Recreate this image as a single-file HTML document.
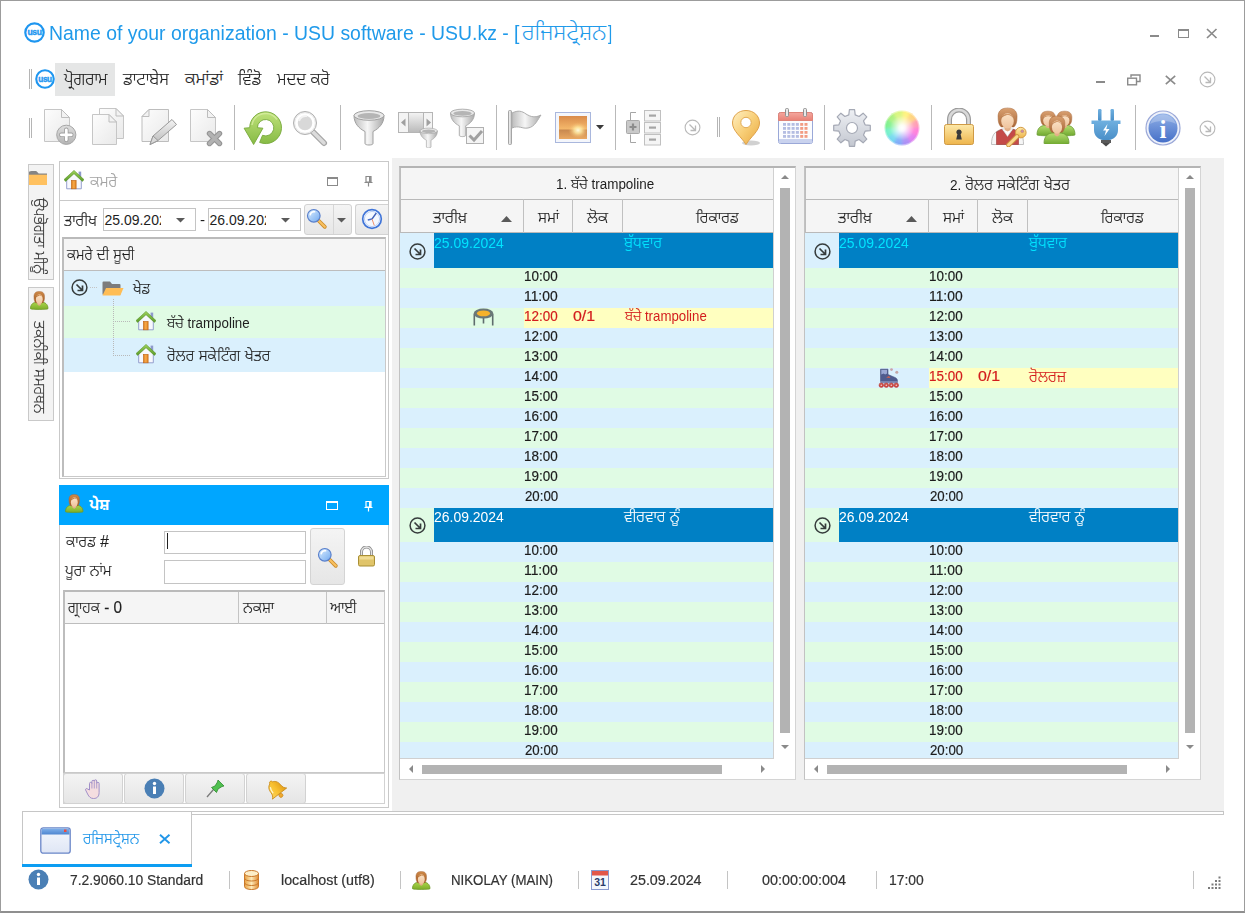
<!DOCTYPE html>
<html lang="pa"><head><meta charset="utf-8"><title>USU software</title>
<style>
html,body{margin:0;padding:0;background:#fff;}
body{width:1245px;height:913px;position:relative;overflow:hidden;font-family:"Liberation Sans","Noto Sans Gurmukhi UI","Noto Sans Gurmukhi","Mukta Mahee","Anek Gurmukhi",sans-serif;font-size:13px;color:#222;}
#w div{position:absolute;box-sizing:border-box;}
#w{position:absolute;left:0;top:0;width:1245px;height:913px;background:#fff;overflow:hidden;}
.t{white-space:pre;height:40px;line-height:40px;transform-origin:0 0;}
#w svg{display:block;}
.g{font-size:115%;}
</style></head>
<body><div id="w">
<svg width="0" height="0" style="position:absolute"><defs>
<linearGradient id="gPage" x1="0" y1="0" x2="1" y2="1"><stop offset="0" stop-color="#fdfdfd"/><stop offset="1" stop-color="#e9e9e9"/></linearGradient>
<linearGradient id="gGray" x1="0" y1="0" x2="0" y2="1"><stop offset="0" stop-color="#f4f4f4"/><stop offset="1" stop-color="#b9b9b9"/></linearGradient>
<linearGradient id="gGray2" x1="0" y1="0" x2="0" y2="1"><stop offset="0" stop-color="#dedede"/><stop offset="1" stop-color="#b4b4b4"/></linearGradient>
<linearGradient id="gGrayH" x1="0" y1="0" x2="1" y2="0"><stop offset="0" stop-color="#bdbdbd"/><stop offset=".45" stop-color="#f6f6f6"/><stop offset="1" stop-color="#a9a9a9"/></linearGradient>
<linearGradient id="gGreen" x1="0" y1="0" x2="0" y2="1"><stop offset="0" stop-color="#bfe27a"/><stop offset="1" stop-color="#86ba44"/></linearGradient>
<linearGradient id="gGold" x1="0" y1="0" x2="0" y2="1"><stop offset="0" stop-color="#fde9a9"/><stop offset="1" stop-color="#eeb54c"/></linearGradient>
<linearGradient id="gPin" x1="0" y1="0" x2="1" y2="1"><stop offset="0" stop-color="#fff0c4"/><stop offset=".5" stop-color="#f8cf78"/><stop offset="1" stop-color="#e9a840"/></linearGradient>
<linearGradient id="gSun" x1="0" y1="0" x2="0" y2="1"><stop offset="0" stop-color="#d98b4a"/><stop offset=".55" stop-color="#f4b76a"/><stop offset=".62" stop-color="#c98a50"/><stop offset="1" stop-color="#e9a862"/></linearGradient>
<radialGradient id="gSunR" cx=".68" cy=".62" r=".35"><stop offset="0" stop-color="#fffbe0"/><stop offset=".4" stop-color="#ffe9a0" stop-opacity=".8"/><stop offset="1" stop-color="#f4b76a" stop-opacity="0"/></radialGradient>
<linearGradient id="gInfo" x1="0" y1="0" x2="0" y2="1"><stop offset="0" stop-color="#8fafe6"/><stop offset="1" stop-color="#4670c8"/></linearGradient>
<linearGradient id="gCalTop" x1="0" y1="0" x2="0" y2="1"><stop offset="0" stop-color="#f4a79e"/><stop offset="1" stop-color="#e98176"/></linearGradient>
<linearGradient id="gGear" x1="0" y1="0" x2="0" y2="1"><stop offset="0" stop-color="#eef0f4"/><stop offset="1" stop-color="#c3c7d0"/></linearGradient>
<linearGradient id="gSkin" x1="0" y1="0" x2="0" y2="1"><stop offset="0" stop-color="#fbe3c8"/><stop offset="1" stop-color="#efc39c"/></linearGradient>
<linearGradient id="gHair" x1="0" y1="0" x2="0" y2="1"><stop offset="0" stop-color="#d9a070"/><stop offset="1" stop-color="#a8683a"/></linearGradient>
<linearGradient id="gHair2" x1="0" y1="0" x2="0" y2="1"><stop offset="0" stop-color="#cf8a48"/><stop offset="1" stop-color="#a25a24"/></linearGradient>
<linearGradient id="gBody2" x1="0" y1="0" x2="0" y2="1"><stop offset="0" stop-color="#a9d44a"/><stop offset="1" stop-color="#7fae2a"/></linearGradient>
<linearGradient id="gBody" x1="0" y1="0" x2="0" y2="1"><stop offset="0" stop-color="#b5de70"/><stop offset="1" stop-color="#6fa82f"/></linearGradient>
<linearGradient id="gPlug" x1="0" y1="0" x2="0" y2="1"><stop offset="0" stop-color="#6fb0e0"/><stop offset="1" stop-color="#4a8fc8"/></linearGradient>
<linearGradient id="gBell" x1="0" y1="0" x2="1" y2="0"><stop offset="0" stop-color="#fbd35a"/><stop offset=".5" stop-color="#f8c030"/><stop offset="1" stop-color="#e09a18"/></linearGradient>
<linearGradient id="gBtn" x1="0" y1="0" x2="0" y2="1"><stop offset="0" stop-color="#f6f6f6"/><stop offset="1" stop-color="#e4e4e4"/></linearGradient>
<linearGradient id="gLens" x1="0" y1="0" x2="1" y2="1"><stop offset="0" stop-color="#dff0ff"/><stop offset="1" stop-color="#6fa8f0"/></linearGradient>
<linearGradient id="gRoof" x1="0" y1="0" x2="0" y2="1"><stop offset="0" stop-color="#9fd35a"/><stop offset="1" stop-color="#5a9a2a"/></linearGradient>
<linearGradient id="gDoor" x1="0" y1="0" x2="1" y2="0"><stop offset="0" stop-color="#e0801f"/><stop offset=".5" stop-color="#f6a94a"/><stop offset="1" stop-color="#e0801f"/></linearGradient>
<linearGradient id="gDb" x1="0" y1="0" x2="1" y2="0"><stop offset="0" stop-color="#e9a040"/><stop offset=".5" stop-color="#fde9b8"/><stop offset="1" stop-color="#e08a30"/></linearGradient>
<linearGradient id="gWin" x1="0" y1="0" x2="0" y2="1"><stop offset="0" stop-color="#f4f7fd"/><stop offset="1" stop-color="#dfe6f5"/></linearGradient>
<linearGradient id="gWinT" x1="0" y1="0" x2="0" y2="1"><stop offset="0" stop-color="#7fb0ea"/><stop offset="1" stop-color="#4f86d0"/></linearGradient>
</defs></svg>
<div style="left:0px;top:0px;width:1245px;height:913px;border:1px solid #9c9c9c;border-bottom:2px solid #8f8f8f;pointer-events:none;z-index:50;"></div>
<div class="ic" style="left:23.5px;top:21.5px;"><svg width="21" height="21" viewBox="0 0 21 21"><circle cx="10.5" cy="10.5" r="9.200000000000001" fill="#fff" stroke="#1e96f0" stroke-width="2.2"/><text x="10.5" y="13.2" text-anchor="middle" font-family="Liberation Sans,sans-serif" font-weight="bold" font-size="8.6" letter-spacing="-.35" stroke="#1e96f0" stroke-width=".35" fill="#1e96f0">usu</text></svg></div>
<div class="t" style="left:48.89px;top:13.71px;font-size:19.3px;color:#1f9aea;transform:scaleX(1.0071);">Name of your organization - USU software - USU.kz - [</div>
<div class="t" style="left:521.95px;top:11.63px;font-size:22.7px;color:#1f9aea;font-weight:300;">ਰਜਿਸਟ੍ਰੇਸ਼ਨ</div>
<div class="t" style="left:608.21px;top:13.71px;font-size:19.3px;color:#1f9aea;transform:scaleX(0.7733);">]</div>
<div style="left:1150px;top:35px;width:9px;height:2px;background:#8a8a8a;"></div>
<div style="left:1178px;top:29px;width:11px;height:9px;border:1px solid #8a8a8a;border-top-width:2px;"></div>
<div style="left:1206px;top:28px;"><svg width="12" height="11" viewBox="0 0 12 11"><path d="M1 1l9.500 9M10.500 1l-9.500 9" stroke="#8a8a8a" stroke-width="1.700"/></svg></div>
<div style="left:29px;top:69px;width:1px;height:20px;background:#b5b5b5;"></div>
<div style="left:31px;top:69px;width:1px;height:20px;background:#b5b5b5;"></div>
<div class="ic" style="left:35px;top:68.5px;"><svg width="20" height="20" viewBox="0 0 20 20"><circle cx="10.0" cy="10.0" r="8.75" fill="#fff" stroke="#1e96f0" stroke-width="2.1"/><text x="10.0" y="12.7" text-anchor="middle" font-family="Liberation Sans,sans-serif" font-weight="bold" font-size="8.2" letter-spacing="-.35" stroke="#1e96f0" stroke-width=".35" fill="#1e96f0">usu</text></svg></div>
<div style="left:55px;top:63px;width:60px;height:33px;background:#e5e6e6;"></div>
<div class="t" style="left:63.74px;top:58.64px;font-size:17.5px;color:#1e1e1e;transform:scaleX(0.9470);font-weight:300;-webkit-text-stroke:.15px;">ਪ੍ਰੋਗਰਾਮ</div>
<div class="t" style="left:123.34px;top:58.64px;font-size:17.5px;color:#1e1e1e;transform:scaleX(0.9596);font-weight:300;-webkit-text-stroke:.15px;">ਡਾਟਾਬੇਸ</div>
<div class="t" style="left:184.95px;top:58.64px;font-size:17.5px;color:#1e1e1e;font-weight:300;-webkit-text-stroke:.15px;">ਕਮਾਂਡਾਂ</div>
<div class="t" style="left:238.04px;top:58.64px;font-size:17.5px;color:#1e1e1e;transform:scaleX(0.9796);font-weight:300;-webkit-text-stroke:.15px;">ਵਿੰਡੋ</div>
<div class="t" style="left:276.54px;top:58.64px;font-size:17.5px;color:#1e1e1e;transform:scaleX(0.9464);font-weight:300;-webkit-text-stroke:.15px;">ਮਦਦ ਕਰੋ</div>
<div style="left:1096px;top:81px;width:9px;height:2px;background:#8a8a8a;"></div>
<div style="left:1127px;top:73.500px;"><svg width="14" height="12" viewBox="0 0 14 12"><path d="M4 3.500v-2.500h9v6.500h-3" fill="none" stroke="#8a8a8a" stroke-width="1.400"/><rect x=".7" y="4.200" width="8.800" height="6.600" fill="#fff" stroke="#8a8a8a" stroke-width="1.400"/></svg></div>
<div style="left:1165px;top:74.500px;"><svg width="11" height="10" viewBox="0 0 11 10"><path d="M.8 .8l9.400 8.400M10.200 .8l-9.400 8.400" stroke="#8a8a8a" stroke-width="1.600"/></svg></div>
<div class="ic" style="left:1198.5px;top:71px;"><svg width="17" height="17" viewBox="0 0 17 17"><circle cx="8.500" cy="8.500" r="7.400" fill="#fff" fill-opacity="0" stroke="#b9b9b9" stroke-width="1.1"/><path d="M5.500 5.500l5.500 5.500M11.500 6.500v5h-5" stroke="#b9b9b9" stroke-width="1.3" fill="none"/></svg></div>
<div style="left:29px;top:118px;width:1px;height:20px;background:#b5b5b5;"></div>
<div style="left:31px;top:118px;width:1px;height:20px;background:#b5b5b5;"></div>
<div style="left:234px;top:105px;width:1px;height:45px;background:#b9b9b9;"></div>
<div style="left:340px;top:105px;width:1px;height:45px;background:#b9b9b9;"></div>
<div style="left:495.5px;top:105px;width:1px;height:45px;background:#b9b9b9;"></div>
<div style="left:614.5px;top:105px;width:1px;height:45px;background:#b9b9b9;"></div>
<div style="left:824px;top:105px;width:1px;height:45px;background:#b9b9b9;"></div>
<div style="left:930.5px;top:105px;width:1px;height:45px;background:#b9b9b9;"></div>
<div style="left:1134.5px;top:105px;width:1px;height:45px;background:#b9b9b9;"></div>
<div style="left:716.5px;top:117px;width:1px;height:20px;background:#b5b5b5;"></div>
<div style="left:719px;top:117px;width:1px;height:20px;background:#b5b5b5;"></div>
<div class="ic" style="left:40px;top:107px;"><svg width="40" height="40" viewBox="0 0 40 40"><path d="M4.5 2.5h17l8 8v24h-25z" fill="url(#gPage)" stroke="#c6c6c6" stroke-width="1"/><path d="M21.5 2.5v8h8z" fill="#f2f2f2" stroke="#bdbdbd" stroke-width="1" stroke-linejoin="round"/><circle cx="26.300" cy="27.800" r="9.600" fill="url(#gGray2)" stroke="#a6a6a6"/><path d="M26.300 22.800v10M21.300 27.800h10" stroke="#9c9c9c" stroke-width="4.400" stroke-linecap="round"/><path d="M26.300 22.800v10M21.300 27.800h10" stroke="#fff" stroke-width="2.800" stroke-linecap="round"/></svg></div>
<div class="ic" style="left:89px;top:107px;"><svg width="40" height="40" viewBox="0 0 40 40"><path d="M10.5 1.5h16.5l7.5 7.5v22.5h-24z" fill="url(#gPage)" stroke="#c6c6c6" stroke-width="1"/><path d="M27.0 1.5v7.5h7.5z" fill="#f2f2f2" stroke="#bdbdbd" stroke-width="1" stroke-linejoin="round"/><path d="M3.5 7.5h16.5l7.5 7.5v22.5h-24z" fill="url(#gPage)" stroke="#c6c6c6" stroke-width="1"/><path d="M20.0 7.5v7.5h7.5z" fill="#f2f2f2" stroke="#bdbdbd" stroke-width="1" stroke-linejoin="round"/></svg></div>
<div class="ic" style="left:137px;top:107px;"><svg width="40" height="40" viewBox="0 0 40 40"><path d="M12 2.5h19.5v32h-26.5v-25z" fill="url(#gPage)" stroke="#bdbdbd"/><path d="M12 2.5v7h-7z" fill="#f2f2f2" stroke="#bdbdbd" stroke-linejoin="round"/><path d="M13 37.5l3-8.5 19-16.5 4.5 5-19 16.5z" fill="url(#gGray)" stroke="#999" stroke-linejoin="round"/><path d="M13 37.5l3-8.5 5 4.500z" fill="#d9d9d9" stroke="#999" stroke-linejoin="round"/></svg></div>
<div class="ic" style="left:186px;top:107px;"><svg width="40" height="40" viewBox="0 0 40 40"><path d="M4.5 2.5h17l8 8v24h-25z" fill="url(#gPage)" stroke="#c6c6c6" stroke-width="1"/><path d="M21.5 2.5v8h8z" fill="#f2f2f2" stroke="#bdbdbd" stroke-width="1" stroke-linejoin="round"/><path d="M23.500 26.500l10 10M33.500 26.500l-10 10" stroke="#959595" stroke-width="5.400" stroke-linecap="round"/><path d="M23.500 26.500l10 10M33.500 26.500l-10 10" stroke="#b2b2b2" stroke-width="3.200" stroke-linecap="round"/></svg></div>
<div class="ic" style="left:241.5px;top:107.5px;"><svg width="40" height="40" viewBox="0 0 40 40"><path d="M7.700 19.700A15.900 15.900 0 1 1 17.640 34.440L20.530 27.300A8.200 8.200 0 1 0 15.400 19.700L20.900 20.200L11.600 36.500L2.100 20.200z" fill="url(#gGreen)" stroke="#76a83a" stroke-width=".9" stroke-linejoin="round"/><path d="M10 17A13.800 13.800 0 0 1 35 11.500" fill="none" stroke="#dcf0a8" stroke-width="1.500" stroke-opacity=".7"/></svg></div>
<div class="ic" style="left:289.8px;top:108.4px;"><svg width="40" height="40" viewBox="0 0 40 40"><path d="M22 23l12 12" stroke="#a5a5a5" stroke-width="6" stroke-linecap="round"/><path d="M22 23l12 12" stroke="#dcdcdc" stroke-width="3.500" stroke-linecap="round"/><circle cx="15" cy="15" r="11.500" fill="#ececec" stroke="#b0b0b0" stroke-width="1"/><circle cx="15" cy="15" r="8.500" fill="#d8d8d8" stroke="#fff" stroke-width="2.500"/><path d="M9 13a7 7 0 0 1 8-5" stroke="#f4f4f4" stroke-width="2" fill="none"/></svg></div>
<div class="ic" style="left:348.5px;top:108px;"><svg width="40" height="40" viewBox="0 0 40 40"><g transform="translate(5,2.5) scale(1.0)"><path d="M0 5c0 8 5 13 11 16v12c0 2 8 2 8 0v-12c6-3 11-8 11-16z" fill="url(#gGrayH)" stroke="#a0a0a0" stroke-width="1"/><ellipse cx="15" cy="5" rx="15" ry="4.800" fill="#e9e9e9" stroke="#a0a0a0"/><ellipse cx="15" cy="5.500" rx="11.500" ry="3" fill="#b5b5b5"/></g></svg></div>
<div class="ic" style="left:397.5px;top:107.5px;"><svg width="42" height="40" viewBox="0 0 42 40"><rect x=".5" y="4.500" width="34" height="20" fill="#f4f4f4" stroke="#b5b5b5"/><rect x="10.500" y="4.500" width="15" height="20" fill="url(#gGray)" stroke="#b5b5b5"/><path d="M7.500 10.500v8l-4.500-4zM28.500 10.500v8l4.500-4z" fill="#a0a0a0"/><g transform="translate(22,20) scale(0.58)"><path d="M0 5c0 8 5 13 11 16v12c0 2 8 2 8 0v-12c6-3 11-8 11-16z" fill="url(#gGrayH)" stroke="#a0a0a0" stroke-width="1"/><ellipse cx="15" cy="5" rx="15" ry="4.800" fill="#e9e9e9" stroke="#a0a0a0"/><ellipse cx="15" cy="5.500" rx="11.500" ry="3" fill="#b5b5b5"/></g></svg></div>
<div class="ic" style="left:449px;top:107.5px;"><svg width="40" height="40" viewBox="0 0 40 40"><g transform="translate(1.5,1) scale(0.8)"><path d="M0 5c0 8 5 13 11 16v12c0 2 8 2 8 0v-12c6-3 11-8 11-16z" fill="url(#gGrayH)" stroke="#a0a0a0" stroke-width="1"/><ellipse cx="15" cy="5" rx="15" ry="4.800" fill="#e9e9e9" stroke="#a0a0a0"/><ellipse cx="15" cy="5.500" rx="11.500" ry="3" fill="#b5b5b5"/></g><rect x="17.500" y="19.500" width="17" height="16" fill="#f4f4f4" stroke="#b0b0b0"/><path d="M20.500 27.500l4.500 4.500 8-9" stroke="#a0a0a0" stroke-width="3" fill="none"/></svg></div>
<div class="ic" style="left:505px;top:107.5px;"><svg width="40" height="40" viewBox="0 0 40 40"><rect x="3.500" y="2.500" width="3" height="34" rx="1" fill="url(#gGrayH)" stroke="#a5a5a5"/><path d="M7 5c6-3 10-2 14 1 5 3 9 4 15 1-3 4-6 12-13 13-6 1-9-3-16 0z" fill="url(#gGrayH)" stroke="#adadad"/></svg></div>
<div class="ic" style="left:554.5px;top:112px;"><svg width="36" height="32" viewBox="0 0 36 32"><rect x=".5" y=".5" width="35" height="30" fill="#f4f6fb" stroke="#a9b7dd"/><rect x="4" y="4" width="28" height="23" fill="url(#gSun)"/><rect x="4" y="4" width="28" height="23" fill="url(#gSunR)"/></svg></div>
<div style="left:595.500px;top:125px;"><svg width="8" height="5" viewBox="0 0 8 5"><path d="M0 0h8l-4 4.500z" fill="#3a3a3a"/></svg></div>
<div class="ic" style="left:624.5px;top:108px;"><svg width="40" height="40" viewBox="0 0 40 40"><path d="M11 4.500h-5.500v8M11 34.500h-5.500v-8" stroke="#a5a5a5" fill="none"/><rect x="1.500" y="12.500" width="13" height="13" rx="1" fill="#c9c9c9" stroke="#a9a9a9"/><path d="M8 15.500v7M4.500 19h7" stroke="#8d8d8d" stroke-width="2.200"/><rect x="19.500" y="2.5" width="16" height="10.500" fill="#f5f5f5" stroke="#c0c0c0"/><rect x="24" y="6.5" width="7" height="2.200" fill="#a5a5a5"/><rect x="19.500" y="14.5" width="16" height="10.500" fill="#f5f5f5" stroke="#c0c0c0"/><rect x="24" y="18.5" width="7" height="2.200" fill="#a5a5a5"/><rect x="19.500" y="26.5" width="16" height="10.500" fill="#f5f5f5" stroke="#c0c0c0"/><rect x="24" y="30.5" width="7" height="2.200" fill="#a5a5a5"/></svg></div>
<div class="ic" style="left:683.5px;top:119px;"><svg width="17" height="17" viewBox="0 0 17 17"><circle cx="8.500" cy="8.500" r="7.400" fill="#fff" fill-opacity="0" stroke="#b9b9b9" stroke-width="1.1"/><path d="M5.500 5.500l5.500 5.500M11.500 6.500v5h-5" stroke="#b9b9b9" stroke-width="1.3" fill="none"/></svg></div>
<div class="ic" style="left:731px;top:108.5px;"><svg width="32" height="38" viewBox="0 0 32 38"><ellipse cx="20" cy="34" rx="9" ry="2.500" fill="#000" fill-opacity=".18"/><path d="M15 1.500c8 0 13.500 5.500 13.500 12.500 0 8-9 14-13.500 21.500-4.500-7.500-13.500-13.500-13.500-21.500 0-7 5.500-12.500 13.500-12.500z" fill="url(#gPin)" stroke="#dfa24a"/><circle cx="15" cy="13.500" r="5.200" fill="#fff" stroke="#e2ab55"/></svg></div>
<div class="ic" style="left:776.5px;top:108px;"><svg width="37" height="37" viewBox="0 0 37 37"><rect x="1.500" y="4.500" width="34" height="31" rx="2" fill="#fbfcfe" stroke="#9aa8d8"/><path d="M1.500 12.500v-6a2 2 0 0 1 2-2h30a2 2 0 0 1 2 2v6z" fill="url(#gCalTop)" stroke="#e08479"/><rect x="2" y="31" width="33" height="4" fill="#c9d2ee"/><rect x="8.500" y=".5" width="3" height="8" rx="1" fill="#e8e8e8" stroke="#909090"/><rect x="26.500" y=".5" width="3" height="8" rx="1" fill="#e8e8e8" stroke="#909090"/><rect x="6.0" y="15" width="3" height="2.800" fill="#b4bde2"/><rect x="10.3" y="15" width="3" height="2.800" fill="#b4bde2"/><rect x="14.6" y="15" width="3" height="2.800" fill="#b4bde2"/><rect x="18.9" y="15" width="3" height="2.800" fill="#b4bde2"/><rect x="23.2" y="15" width="3" height="2.800" fill="#f29c84"/><rect x="27.5" y="15" width="3" height="2.800" fill="#f29c84"/><rect x="6.0" y="19" width="3" height="2.800" fill="#b4bde2"/><rect x="10.3" y="19" width="3" height="2.800" fill="#b4bde2"/><rect x="14.6" y="19" width="3" height="2.800" fill="#b4bde2"/><rect x="18.9" y="19" width="3" height="2.800" fill="#b4bde2"/><rect x="23.2" y="19" width="3" height="2.800" fill="#f29c84"/><rect x="27.5" y="19" width="3" height="2.800" fill="#f29c84"/><rect x="6.0" y="23" width="3" height="2.800" fill="#b4bde2"/><rect x="10.3" y="23" width="3" height="2.800" fill="#b4bde2"/><rect x="14.6" y="23" width="3" height="2.800" fill="#b4bde2"/><rect x="18.9" y="23" width="3" height="2.800" fill="#b4bde2"/><rect x="23.2" y="23" width="3" height="2.800" fill="#f29c84"/><rect x="27.5" y="23" width="3" height="2.800" fill="#f29c84"/><rect x="6.0" y="27" width="3" height="2.800" fill="#b4bde2"/><rect x="10.3" y="27" width="3" height="2.800" fill="#b4bde2"/><rect x="14.6" y="27" width="3" height="2.800" fill="#b4bde2"/><rect x="18.9" y="27" width="3" height="2.800" fill="#b4bde2"/><rect x="23.2" y="27" width="3" height="2.800" fill="#f29c84"/><rect x="27.5" y="27" width="3" height="2.800" fill="#f29c84"/></svg></div>
<div class="ic" style="left:832px;top:107.5px;"><svg width="40" height="40" viewBox="0 0 40 40"><path d="M33.1 16.8L38.3 17.4L38.3 22.6L33.1 23.2L31.5 27.1L34.8 31.1L31.1 34.8L27.1 31.5L23.2 33.1L22.6 38.3L17.4 38.3L16.8 33.1L12.9 31.5L8.9 34.8L5.2 31.1L8.5 27.1L6.9 23.2L1.7 22.6L1.7 17.4L6.9 16.8L8.5 12.9L5.2 8.9L8.9 5.2L12.9 8.5L16.8 6.9L17.4 1.7L22.6 1.7L23.2 6.9L27.1 8.5L31.1 5.2L34.8 8.9L31.5 12.9z" fill="url(#gGear)" stroke="#a5a9b5" stroke-linejoin="round" stroke-width="1.200"/><circle cx="20" cy="20" r="5.500" fill="#fff" stroke="#a5a9b5" stroke-width="1.200"/></svg></div>
<div class="ic" style="left:883.5px;top:109.5px;"><svg width="36" height="36" viewBox="0 0 36 36"><defs><radialGradient id="gWh" cx=".5" cy=".5" r=".5"><stop offset="0" stop-color="#fff"/><stop offset=".18" stop-color="#fff" stop-opacity=".9"/><stop offset=".7" stop-color="#fff" stop-opacity=".12"/><stop offset="1" stop-color="#fff" stop-opacity="0"/></radialGradient><filter id="fWh" x="-20%" y="-20%" width="140%" height="140%"><feGaussianBlur stdDeviation="1.600"/></filter><clipPath id="cWh"><circle cx="18" cy="18" r="17.500"/></clipPath></defs><g clip-path="url(#cWh)"><g filter="url(#fWh)"><path d="M18 18L17.62 -1.00A19 19 0 0 1 28.15 1.94z" fill="#fff27a"/><path d="M18 18L27.17 1.36A19 19 0 0 1 34.82 9.17z" fill="#ffd27a"/><path d="M18 18L34.26 8.17A19 19 0 0 1 36.98 18.76z" fill="#ff9ab0"/><path d="M18 18L37.00 17.62A19 19 0 0 1 34.06 28.15z" fill="#ff7ad8"/><path d="M18 18L34.64 27.17A19 19 0 0 1 26.83 34.82z" fill="#e07af0"/><path d="M18 18L27.83 34.26A19 19 0 0 1 17.24 36.98z" fill="#a88af5"/><path d="M18 18L18.38 37.00A19 19 0 0 1 7.85 34.06z" fill="#7aa8f8"/><path d="M18 18L8.83 34.64A19 19 0 0 1 1.18 26.83z" fill="#6fd8f0"/><path d="M18 18L1.74 27.83A19 19 0 0 1 -0.98 17.24z" fill="#6ff0c8"/><path d="M18 18L-1.00 18.38A19 19 0 0 1 1.94 7.85z" fill="#7af08a"/><path d="M18 18L1.36 8.83A19 19 0 0 1 9.17 1.18z" fill="#a8f07a"/><path d="M18 18L8.17 1.74A19 19 0 0 1 18.76 -0.98z" fill="#d8f57a"/></g><circle cx="18" cy="18" r="17.500" fill="url(#gWh)"/></g><circle cx="18" cy="18" r="17" fill="none" stroke="#fff" stroke-opacity=".35" stroke-width="1.500"/></svg></div>
<div class="ic" style="left:943px;top:108px;"><svg width="32" height="38" viewBox="0 0 32 38"><path d="M6.500 18v-6.500a9.500 9.500 0 0 1 19 0v6.500" fill="none" stroke="#9a9a9a" stroke-width="5"/><path d="M6.500 18v-6.500a9.500 9.500 0 0 1 19 0v6.500" fill="none" stroke="#d9d9d9" stroke-width="2.600"/><rect x="1.500" y="16.500" width="29" height="20" rx="2" fill="url(#gGold)" stroke="#cf9a45"/><path d="M16 21.500a2.600 2.600 0 0 1 1.600 4.700l1.200 5.300h-5.600l1.200-5.300a2.600 2.600 0 0 1 1.600-4.700z" fill="#3a3a3a"/></svg></div>
<div class="ic" style="left:990px;top:106.5px;"><svg width="37" height="40" viewBox="0 0 37 40"><path d="M1.500 37.500c0-9 3-13.500 10-15h12.500c7 1.500 9.500 6 9.500 15z" fill="#f6f6f6" stroke="#b9b9b9" stroke-width=".9"/><path d="M6.500 37.500v-12.500l5-2.800 6 7.300 6-7.300 5 2.800v12.500z" fill="#c44a48" stroke="#a03534" stroke-width=".6"/><path d="M12.500 21.500l5 8 5-8-2 0-3 2-3-2z" fill="#fff" stroke="#cfcfcf" stroke-width=".5"/><path d="M0.0 30.0c0-0.0 0.0-0.0 0.0-0.0h0.0c0.0 0 0.0 0.0 0.0 0.0c0 0.0-0.0 0.0-0.0 0z" fill="none" stroke="none" stroke-width=".8"/><path d="M14.5 18.2h6.1v4.7l-3.0 1.7l-3.0-1.7z" fill="#e4b088"/><path d="M17.5 1.0c8.0 0 9.9 4.7 9.5 9.7c0 4.3-1.0 7.3-3.0 9.2h-12.9c-2.1-1.9-3.0-4.9-3.0-9.2c-0.4-4.9 1.5-9.7 9.5-9.7z" fill="url(#gHair)" stroke="#a8683a" stroke-width=".5"/><ellipse cx="17.5" cy="13.9" rx="6.3" ry="7.7" fill="url(#gSkin)"/><path d="M10.9 12.0c1.3-7.0 11.3-7.0 13.1 0c-2.5-3.9-5.6-4.6-8.2-3.5c-1.9 0.4-3.8 1.5-5.0 3.5z" fill="url(#gHair)"/><circle cx="30.800" cy="25.600" r="5.300" fill="url(#gGold)" stroke="#d49a42"/><circle cx="32.300" cy="24.200" r="1.500" fill="#c98ab0" stroke="#c9924a" stroke-width=".5"/><path d="M27 29.500l-8.500 8.500" stroke="#cf9740" stroke-width="4.600" stroke-linecap="round"/><path d="M27 29.500l-8.500 8.500" stroke="#fbd88c" stroke-width="2.800" stroke-linecap="round"/></svg></div>
<div class="ic" style="left:1036px;top:110px;"><svg width="40" height="34" viewBox="0 0 40 34"><path d="M1.0 24.8c0-7.0 4.0-9.3 7.9-9.3h6.2c4.0 0 7.9 2.3 7.9 9.3c0 1.3-22.0 1.3-22.0 0z" fill="url(#gBody)" stroke="#6a9a35" stroke-width=".8"/><path d="M9.7 13.6h4.6v3.4l-2.3 1.2l-2.3-1.2z" fill="#e4b088"/><path d="M12.0 1.2c6.1 0 7.5 3.4 7.2 7.0c0 3.1-0.7 5.3-2.3 6.7h-9.9c-1.6-1.4-2.3-3.6-2.3-6.7c-0.3-3.6 1.2-7.0 7.2-7.0z" fill="url(#gHair)" stroke="#a8683a" stroke-width=".5"/><ellipse cx="12.0" cy="10.5" rx="4.8" ry="5.6" fill="url(#gSkin)"/><path d="M6.9 9.1c1.0-5.0 8.6-5.0 10.2 0c-1.9-2.8-4.3-3.3-6.2-2.5c-1.4 0.3-2.9 1.1-3.9 2.5z" fill="url(#gHair)"/><path d="M17.0 24.8c0-7.0 4.0-9.3 7.9-9.3h6.2c4.0 0 7.9 2.3 7.9 9.3c0 1.3-22.0 1.3-22.0 0z" fill="url(#gBody)" stroke="#6a9a35" stroke-width=".8"/><path d="M26.3 13.6h4.6v3.4l-2.3 1.2l-2.3-1.2z" fill="#e4b088"/><path d="M28.6 1.2c6.1 0 7.5 3.4 7.2 7.0c0 3.1-0.7 5.3-2.3 6.7h-9.9c-1.6-1.4-2.3-3.6-2.3-6.7c-0.3-3.6 1.2-7.0 7.2-7.0z" fill="url(#gHair)" stroke="#a8683a" stroke-width=".5"/><ellipse cx="28.6" cy="10.5" rx="4.8" ry="5.6" fill="url(#gSkin)"/><path d="M23.5 9.1c1.0-5.0 8.6-5.0 10.2 0c-1.9-2.8-4.3-3.3-6.2-2.5c-1.4 0.3-2.9 1.1-3.9 2.5z" fill="url(#gHair)"/><path d="M8.0 33.5c0-7.9 4.5-10.5 9.0-10.5h7.0c4.5 0 9.0 2.6 9.0 10.5c0 1.5-25.0 1.5-25.0 0z" fill="url(#gBody)" stroke="#6a9a35" stroke-width=".8"/><path d="M18.5 20.8h5.0v4.1l-2.5 1.5l-2.5-1.5z" fill="#e4b088"/><path d="M21.0 6.0c6.5 0 8.1 4.1 7.8 8.3c0 3.7-0.8 6.3-2.5 8.0h-10.5c-1.7-1.7-2.5-4.3-2.5-8.0c-0.3-4.3 1.2-8.3 7.8-8.3z" fill="url(#gHair)" stroke="#a8683a" stroke-width=".5"/><ellipse cx="21.0" cy="17.1" rx="5.1" ry="6.7" fill="url(#gSkin)"/><path d="M15.6 15.4c1.0-6.0 9.2-6.0 10.8 0c-2.0-3.3-4.6-4.0-6.6-3.0c-1.5 0.3-3.1 1.3-4.2 3.0z" fill="url(#gHair)"/></svg></div>
<div class="ic" style="left:1090.5px;top:107.5px;"><svg width="30" height="40" viewBox="0 0 30 40"><rect x="7" y="1" width="3.500" height="12" rx="1.200" fill="url(#gPlug)"/><rect x="19.500" y="1" width="3.500" height="12" rx="1.200" fill="url(#gPlug)"/><path d="M.5 12.500h29v3.500h-2.500v6c0 6-4.500 9.500-9 10h-6c-4.500-.5-9-4-9-10v-6h-2.500z" fill="url(#gPlug)"/><path d="M16.500 16l-4.500 6.500h3l-1.500 5.500 5-7h-3.200z" fill="#fff"/><rect x="10" y="32" width="10" height="3" fill="#5a5a5a"/><path d="M11 35h8l-4 3.500z" fill="#4a4a4a"/></svg></div>
<div class="ic" style="left:1144.5px;top:109.5px;"><svg width="36" height="36" viewBox="0 0 36 36"><circle cx="18" cy="18" r="17" fill="#eef1fa" stroke="#9aa8d8" stroke-width="1.200"/><circle cx="18" cy="18" r="14.500" fill="url(#gInfo)"/><path d="M5 14a13.500 13.500 0 0 1 26 0c-6-4-20-4-26 0z" fill="#fff" fill-opacity=".25"/><text x="18" y="27.500" text-anchor="middle" font-family="Liberation Serif,serif" font-weight="bold" font-size="25" fill="#fff">i</text></svg></div>
<div class="ic" style="left:1198.5px;top:119.5px;"><svg width="17" height="17" viewBox="0 0 17 17"><circle cx="8.500" cy="8.500" r="7.400" fill="#fff" fill-opacity="0" stroke="#b9b9b9" stroke-width="1.1"/><path d="M5.500 5.500l5.500 5.500M11.500 6.500v5h-5" stroke="#b9b9b9" stroke-width="1.3" fill="none"/></svg></div>
<div style="left:391.5px;top:157.5px;width:832.5px;height:653px;background:#f0f0f0;"></div>
<div style="left:28px;top:164px;width:26px;height:116px;background:#f3f3f3;border:1px solid #c9c9c9;overflow:hidden;"><div class="ic" style="left:-.5px;top:6.200px;"><svg width="18" height="14" viewBox="0 0 18 14"><path d="M0 .8c2-1 5-1.200 7.500-.6l2.200 2.300h8.300v3h-18z" fill="#858585"/><rect x="0" y="3.700" width="18" height="10.300" fill="#ffc160"/></svg></div></div>
<div style="left:27.700px;top:198px;width:22px;height:79px;writing-mode:vertical-rl;white-space:pre;font-size:16px;font-weight:300;-webkit-text-stroke:.15px;line-height:22px;color:#333;"><span style="display:inline-block;transform:scaleY(.96);transform-origin:0 0;">ਉਪਭੋਗਤਾ ਮੀਨੂੰ</span></div>
<div style="left:28px;top:286.5px;width:26px;height:134px;background:#f3f3f3;border:1px solid #c9c9c9;"></div>
<div class="ic" style="left:29.5px;top:290.5px;"><svg width="19" height="19" viewBox="0 0 19 19"><path d="M0.5 17.7c0-4.8 3.1-6.4 6.3-6.4h4.9c3.1 0 6.3 1.6 6.3 6.4c0 0.9-17.5 0.9-17.5 0z" fill="url(#gBody2)" stroke="#6f9a28" stroke-width=".8"/><path d="M7.6 10.8h3.3v2.9l-1.7 1.0l-1.7-1.0z" fill="#e4b088"/><path d="M9.3 0.4c4.4 0 5.4 2.9 5.2 5.9c0 2.6-0.5 4.4-1.7 5.6h-7.1c-1.1-1.2-1.7-3.0-1.7-5.6c-0.2-3.0 0.8-5.9 5.2-5.9z" fill="url(#gHair2)" stroke="#a8683a" stroke-width=".5"/><ellipse cx="9.3" cy="8.2" rx="3.4" ry="4.7" fill="url(#gSkin)"/><path d="M5.6 7.0c0.7-4.2 6.2-4.2 7.5 0c-1.4-2.3-3.1-2.8-4.5-2.1c-1.0 0.2-2.1 0.9-3.0 2.1z" fill="url(#gHair2)"/></svg></div>
<div style="left:27.700px;top:320.500px;width:22px;height:98px;writing-mode:vertical-rl;white-space:pre;font-size:16px;font-weight:300;-webkit-text-stroke:.15px;line-height:22px;color:#333;"><span style="display:inline-block;transform:scaleY(.96);transform-origin:0 0;">ਤਕਨੀਕੀ ਸਮਰਥਨ</span></div>
<div style="left:59px;top:160.5px;width:330px;height:318.5px;background:#fff;border:1px solid #c9c9c9;"></div>
<div style="left:59px;top:200px;width:330px;height:1px;background:#c9c9c9;"></div>
<div class="ic" style="left:64px;top:170px;"><svg width="20" height="20" viewBox="0 0 20 20"><g transform="scale(1.0)"><rect x="14.600" y="1.600" width="2.600" height="6" fill="#8e99cc"/><path d="M2.700 9.500l7.300-6.500 7.300 6.500v9.300h-14.600z" fill="#f7f8fd" stroke="#8a95c8" stroke-width=".9"/><rect x="7.500" y="10.500" width="4.600" height="8.300" fill="url(#gDoor)" stroke="#c26a1a" stroke-width=".7"/><path d="M10 .4l10 9.200-1.600 1.800-8.400-7.700-8.400 7.700-1.600-1.800z" fill="url(#gRoof)" stroke="#5a962a" stroke-width=".6" stroke-linejoin="round"/></g></svg></div>
<div class="t" style="left:89.54px;top:160.59px;font-size:16.2px;color:#a3a3a3;transform:scaleX(0.9789);font-weight:300;-webkit-text-stroke:.15px;">ਕਮਰੇ</div>
<div style="left:326.5px;top:176.5px;width:11px;height:9px;border:1px solid #8a8a8a;border-top-width:2px;"></div>
<div style="left:363.500px;top:176px;"><svg width="9" height="11" viewBox="0 0 9 11"><path d="M2 .5h5v5.500h-5zM.5 6.500h8M4.500 6.500v4" fill="none" stroke="#8a8a8a" stroke-width="1.200"/><rect x="5" y="1" width="1.800" height="5" fill="#8a8a8a"/></svg></div>
<div class="t" style="left:64.14px;top:199.59px;font-size:16.2px;color:#1e1e1e;transform:scaleX(0.9612);font-weight:300;-webkit-text-stroke:.15px;">ਤਾਰੀਖ</div>
<div style="left:102.5px;top:208px;width:93.5px;height:23px;background:#fff;border:1px solid #c4c4c4;"></div>
<div style="left:103.500px;top:209px;width:57.800px;height:21px;overflow:hidden;">
<div class="t" style="left:0.95px;top:-9.45px;font-size:14px;color:#1e1e1e;">25.09.2024</div>
</div>
<div style="left:175.500px;top:217.500px;"><svg width="9" height="5" viewBox="0 0 9 5"><path d="M0 0h9l-4.500 4.500z" fill="#5a5a5a"/></svg></div>
<div class="t" style="left:200.06px;top:199.55px;font-size:14px;color:#1e1e1e;transform:scaleX(1.0857);">-</div>
<div style="left:207.5px;top:208px;width:93.5px;height:23px;background:#fff;border:1px solid #c4c4c4;"></div>
<div style="left:208.500px;top:209px;width:57.800px;height:21px;overflow:hidden;">
<div class="t" style="left:0.95px;top:-9.45px;font-size:14px;color:#1e1e1e;">26.09.2024</div>
</div>
<div style="left:280.500px;top:217.500px;"><svg width="9" height="5" viewBox="0 0 9 5"><path d="M0 0h9l-4.500 4.500z" fill="#5a5a5a"/></svg></div>
<div style="left:303.6px;top:204px;width:48.2px;height:30.5px;background:linear-gradient(#f4f4f4,#e6e6e6);border:1px solid #d2d2d2;border-radius:3px;"></div>
<div style="left:333px;top:205px;width:1px;height:28.5px;background:#d6d6d6;"></div>
<div class="ic" style="left:306.3px;top:207.5px;"><svg width="22" height="22" viewBox="0 0 22 22"><path d="M12 12l6.800 6.800" stroke="#c98a2a" stroke-width="3.800" stroke-linecap="round"/><path d="M12 12l6.800 6.800" stroke="#f8c060" stroke-width="2.200" stroke-linecap="round"/><circle cx="7.800" cy="7.800" r="6.300" fill="url(#gLens)" stroke="#5a80cc" stroke-width="1.200"/><path d="M4.200 6.800a4 4 0 0 1 4.400-3" stroke="#fff" stroke-width="1.500" fill="none" stroke-linecap="round"/></svg></div>
<div style="left:337.300px;top:217.500px;"><svg width="9" height="5" viewBox="0 0 9 5"><path d="M0 0h9l-4.500 4.500z" fill="#5a5a5a"/></svg></div>
<div style="left:354.6px;top:204px;width:33.4px;height:30.5px;background:linear-gradient(#f4f4f4,#e6e6e6);border:1px solid #d2d2d2;border-right:none;border-radius:3px 0 0 3px;"></div>
<div class="ic" style="left:360.9px;top:207.5px;"><svg width="22" height="22" viewBox="0 0 22 22"><circle cx="11" cy="11" r="9.300" fill="#fff" stroke="#3f74d8" stroke-width="1.700"/><circle cx="11" cy="11" r="7.600" fill="#f4f8ff" stroke="#b4cbf2" stroke-width=".9"/><path d="M11 11l4.300-6" stroke="#3f5fb8" stroke-width="1.300"/><path d="M11 11l-4.200 1" stroke="#4a6fc8" stroke-width="1.300"/><path d="M11 11l2.300 6.500" stroke="#f0906a" stroke-width="1"/></svg></div>
<div style="left:62px;top:236.5px;width:324px;height:240px;background:#fff;border:1px solid #c9c9c9;border-top:2px solid #bababa;border-left:2px solid #bdbdbd;"></div>
<div style="left:64px;top:238.5px;width:321px;height:32px;background:#f5f5f5;border-bottom:1px solid #bdbdbd;"></div>
<div class="t" style="left:66.93px;top:234.29px;font-size:16.2px;color:#1e1e1e;transform:scaleX(0.9162);font-weight:300;-webkit-text-stroke:.15px;">ਕਮਰੇ ਦੀ ਸੂਚੀ</div>
<div style="left:64px;top:270.5px;width:321px;height:35px;background:#daf0fd;"></div>
<div style="left:64px;top:305.5px;width:321px;height:32.8px;background:#e0fbe4;"></div>
<div style="left:64px;top:338.3px;width:321px;height:33.4px;background:#daf0fd;"></div>
<div class="ic" style="left:70.8px;top:279.3px;"><svg width="17" height="17" viewBox="0 0 17 17"><circle cx="8.500" cy="8.500" r="7.400" fill="#fff" fill-opacity="0" stroke="#363c3c" stroke-width="1.5"/><path d="M5.500 5.500l5.500 5.500M11.500 6.500v5h-5" stroke="#363c3c" stroke-width="1.7" fill="none"/></svg></div>
<div class="ic" style="left:101.5px;top:280.7px;"><svg width="22" height="15" viewBox="0 0 22 15"><path d="M.5 1.500a1 1 0 0 1 1-1h6.500l2 2.500h7.500a1 1 0 0 1 1 1v9.500h-18z" fill="#7c7c7c"/><path d="M4 7h17.500l-3.200 7.500h-17.800z" fill="#ffbd55"/></svg></div>
<div class="t" style="left:132.83px;top:267.69px;font-size:16.2px;color:#1e1e1e;transform:scaleX(0.9263);font-weight:300;-webkit-text-stroke:.15px;">ਖੇਡ</div>
<div style="left:113px;top:298.5px;width:1px;height:57px;border-left:1px dotted #b9b9b9;"></div>
<div style="left:113px;top:320.5px;width:17px;height:1px;border-top:1px dotted #b9b9b9;"></div>
<div style="left:113px;top:354.5px;width:17px;height:1px;border-top:1px dotted #b9b9b9;"></div>
<div style="left:89.5px;top:287px;width:7px;height:1px;border-top:1px dotted #c4c4c4;"></div>
<div class="ic" style="left:136.3px;top:310.7px;"><svg width="20" height="20" viewBox="0 0 20 20"><g transform="scale(1.0)"><rect x="14.600" y="1.600" width="2.600" height="6" fill="#8e99cc"/><path d="M2.700 9.500l7.300-6.500 7.300 6.500v9.300h-14.600z" fill="#f7f8fd" stroke="#8a95c8" stroke-width=".9"/><rect x="7.500" y="10.500" width="4.600" height="8.300" fill="url(#gDoor)" stroke="#c26a1a" stroke-width=".7"/><path d="M10 .4l10 9.200-1.600 1.800-8.400-7.700-8.400 7.700-1.600-1.800z" fill="url(#gRoof)" stroke="#5a962a" stroke-width=".6" stroke-linejoin="round"/></g></svg></div>
<div class="ic" style="left:136.3px;top:344.3px;"><svg width="20" height="20" viewBox="0 0 20 20"><g transform="scale(1.0)"><rect x="14.600" y="1.600" width="2.600" height="6" fill="#8e99cc"/><path d="M2.700 9.500l7.300-6.500 7.300 6.500v9.300h-14.600z" fill="#f7f8fd" stroke="#8a95c8" stroke-width=".9"/><rect x="7.500" y="10.500" width="4.600" height="8.300" fill="url(#gDoor)" stroke="#c26a1a" stroke-width=".7"/><path d="M10 .4l10 9.200-1.600 1.800-8.400-7.700-8.400 7.700-1.600-1.800z" fill="url(#gRoof)" stroke="#5a962a" stroke-width=".6" stroke-linejoin="round"/></g></svg></div>
<div class="t" style="left:166.74px;top:302.55px;font-size:14px;color:#1e1e1e;transform:scaleX(0.9526);"><span style="font-size:14.5px;font-weight:300;-webkit-text-stroke:.15px">ਬੱਚੇ</span> trampoline</div>
<div class="t" style="left:166.74px;top:335.29px;font-size:16.2px;color:#1e1e1e;transform:scaleX(0.9598);font-weight:300;-webkit-text-stroke:.15px;">ਰੋਲਰ ਸਕੇਟਿੰਗ ਖੇਤਰ</div>
<div style="left:59px;top:484.5px;width:330px;height:323px;background:#fff;border:1px solid #c9c9c9;"></div>
<div style="left:59px;top:484.5px;width:330px;height:40.5px;background:#00a6ff;"></div>
<div class="ic" style="left:64.5px;top:493.9px;"><svg width="19" height="19" viewBox="0 0 19 19"><path d="M0.5 17.7c0-4.8 3.1-6.4 6.3-6.4h4.9c3.1 0 6.3 1.6 6.3 6.4c0 0.9-17.5 0.9-17.5 0z" fill="url(#gBody2)" stroke="#6f9a28" stroke-width=".8"/><path d="M7.6 10.8h3.3v2.9l-1.7 1.0l-1.7-1.0z" fill="#e4b088"/><path d="M9.3 0.4c4.4 0 5.4 2.9 5.2 5.9c0 2.6-0.5 4.4-1.7 5.6h-7.1c-1.1-1.2-1.7-3.0-1.7-5.6c-0.2-3.0 0.8-5.9 5.2-5.9z" fill="url(#gHair2)" stroke="#a8683a" stroke-width=".5"/><ellipse cx="9.3" cy="8.2" rx="3.4" ry="4.7" fill="url(#gSkin)"/><path d="M5.6 7.0c0.7-4.2 6.2-4.2 7.5 0c-1.4-2.3-3.1-2.8-4.5-2.1c-1.0 0.2-2.1 0.9-3.0 2.1z" fill="url(#gHair2)"/></svg></div>
<div class="t" style="left:89.2px;top:485.39px;font-size:15.6px;color:#fff;font-weight:bold;">ਪੇਸ਼</div>
<div style="left:326px;top:500.5px;width:11.5px;height:9px;border:1px solid #fff;border-top-width:2px;"></div>
<div style="left:364px;top:500.500px;"><svg width="9" height="11" viewBox="0 0 9 11"><path d="M2 .5h5v5.500h-5zM.5 6.500h8M4.500 6.500v4" fill="none" stroke="#fff" stroke-width="1.200"/><rect x="5" y="1" width="1.800" height="5" fill="#fff"/></svg></div>
<div class="t" style="left:65.64px;top:521.09px;font-size:16.2px;color:#1e1e1e;transform:scaleX(0.9503);font-weight:300;-webkit-text-stroke:.15px;">ਕਾਰਡ #</div>
<div class="t" style="left:64.54px;top:550.49px;font-size:16.2px;color:#1e1e1e;transform:scaleX(0.9475);font-weight:300;-webkit-text-stroke:.15px;">ਪੂਰਾ ਨਾਂਮ</div>
<div style="left:164px;top:530.5px;width:141.8px;height:23.3px;background:#fff;border:1px solid #c4c4c4;"></div>
<div style="left:166.5px;top:532.7px;width:1px;height:16.5px;background:#222;"></div>
<div style="left:164px;top:560.3px;width:141.8px;height:23.3px;background:#fff;border:1px solid #c4c4c4;"></div>
<div style="left:310.3px;top:528px;width:34.5px;height:57px;background:linear-gradient(#f4f4f4,#e6e6e6);border:1px solid #d4d4d4;border-radius:3px;"></div>
<div class="ic" style="left:316.8px;top:547px;"><svg width="22" height="22" viewBox="0 0 22 22"><path d="M12 12l6.800 6.800" stroke="#c98a2a" stroke-width="3.800" stroke-linecap="round"/><path d="M12 12l6.800 6.800" stroke="#f8c060" stroke-width="2.200" stroke-linecap="round"/><circle cx="7.800" cy="7.800" r="6.300" fill="url(#gLens)" stroke="#5a80cc" stroke-width="1.200"/><path d="M4.200 6.800a4 4 0 0 1 4.400-3" stroke="#fff" stroke-width="1.500" fill="none" stroke-linecap="round"/></svg></div>
<div class="ic" style="left:357px;top:546px;"><svg width="19" height="21" viewBox="0 0 19 21"><path d="M4.500 10v-4a5 5 0 0 1 10 0v4" fill="none" stroke="#8a8a8a" stroke-width="3"/><path d="M4.500 10v-4a5 5 0 0 1 10 0v4" fill="none" stroke="#e4e4e4" stroke-width="1.300"/><rect x="1.500" y="9.500" width="16" height="10.500" rx="1.500" fill="#e0c469" stroke="#a98f35"/><rect x="2.500" y="10.500" width="14" height="3" fill="#f0dc95"/></svg></div>
<div style="left:63px;top:589.5px;width:322px;height:183.7px;background:#fff;border:1px solid #c9c9c9;border-top:2px solid #bababa;border-left:2px solid #bdbdbd;"></div>
<div style="left:65px;top:591.5px;width:319px;height:32px;background:#f5f5f5;border-bottom:1px solid #bdbdbd;"></div>
<div style="left:238px;top:591.5px;width:1px;height:32px;background:#c4c4c4;"></div>
<div style="left:325.5px;top:591.5px;width:1px;height:32px;background:#c4c4c4;"></div>
<div class="t" style="left:68.04px;top:587.09px;font-size:16.2px;color:#1e1e1e;transform:scaleX(0.9463);font-weight:300;-webkit-text-stroke:.15px;">ਗ੍ਰਾਹਕ - 0</div>
<div class="t" style="left:242.94px;top:587.09px;font-size:16.2px;color:#1e1e1e;transform:scaleX(0.9534);font-weight:300;-webkit-text-stroke:.15px;">ਨਕਸ਼ਾ</div>
<div class="t" style="left:330.04px;top:587.09px;font-size:16.2px;color:#1e1e1e;transform:scaleX(0.9474);font-weight:300;-webkit-text-stroke:.15px;">ਆਈ</div>
<div style="left:62.7px;top:773px;width:322.5px;height:30.5px;background:#fff;border:1px solid #d2d2d2;"></div>
<div style="left:62.7px;top:773px;width:60px;height:30.5px;background:linear-gradient(#f4f4f4,#e5e5e5);border:1px solid #d2d2d2;border-radius:3px;"></div>
<div class="ic" style="left:84.7px;top:779px;"><svg width="17" height="20" viewBox="0 0 17 20"><path d="M4.500 11v-6.500a1.200 1.200 0 0 1 2.400 0v-2a1.200 1.200 0 0 1 2.400 0v-.5a1.200 1.200 0 0 1 2.400 0v2.500a1.200 1.200 0 0 1 2.400 0v9c0 4-2 6-5.500 6-3 0-4.500-1.500-6-4.500l-2-4c-.5-1.200 1-2 2-1z" fill="#f4dde0" stroke="#a08fc8" stroke-width="1"/><path d="M6.900 4.500v5M9.300 3v6.500M11.700 4.500v5" stroke="#a08fc8" stroke-width=".8"/></svg></div>
<div style="left:123.7px;top:773px;width:60px;height:30.5px;background:linear-gradient(#f4f4f4,#e5e5e5);border:1px solid #d2d2d2;border-radius:3px;"></div>
<div class="ic" style="left:143.7px;top:777.5px;"><svg width="21" height="21" viewBox="0 0 21 21"><circle cx="10.500" cy="10.500" r="10" fill="#4a7fb5"/><rect x="9" y="8.500" width="3" height="7.500" fill="#fff"/><circle cx="10.500" cy="5.500" r="1.700" fill="#fff"/></svg></div>
<div style="left:184.7px;top:773px;width:60px;height:30.5px;background:linear-gradient(#f4f4f4,#e5e5e5);border:1px solid #d2d2d2;border-radius:3px;"></div>
<div class="ic" style="left:205.7px;top:778.5px;"><svg width="19" height="19" viewBox="0 0 19 19"><path d="M1 18l6.500-7.500" stroke="#7a7a7a" stroke-width="1.300"/><path d="M5.500 8.500l5 5 1.500-3.500 4-2.500 2-.5-6-6-.5 2-2.500 4z" fill="#4fc04f" stroke="#2f8a2f" stroke-width=".8" stroke-linejoin="round"/></svg></div>
<div style="left:245.7px;top:773px;width:60px;height:30.5px;background:linear-gradient(#f4f4f4,#e5e5e5);border:1px solid #d2d2d2;border-radius:3px;"></div>
<div class="ic" style="left:265.2px;top:777.5px;"><svg width="22" height="22" viewBox="0 0 22 22"><g transform="rotate(-38 11 11)"><circle cx="11" cy="19" r="2" fill="#f0a830" stroke="#c98a1a" stroke-width=".7"/><path d="M11 1.500c-1.100 0-1.700.8-1.700 1.700-3.100 1.100-4.500 3.900-4.500 7.300 0 3.100-1.100 4.900-2.800 6.300h18c-1.700-1.400-2.800-3.200-2.800-6.300 0-3.400-1.400-6.200-4.500-7.300 0-.9-.6-1.700-1.700-1.700z" fill="url(#gBell)" stroke="#c98a1a" stroke-width=".8" stroke-linejoin="round"/><path d="M7.500 6.500c-1 1.500-1.300 3.500-1.300 5.500" stroke="#fff6cc" stroke-width="1.300" fill="none" stroke-linecap="round"/></g></svg></div>
<div style="left:399.3px;top:166px;width:397.2px;height:613.5px;background:#fff;border:1px solid #d4d4d4;border-top:2px solid #b4b4b4;border-left:1px solid #c2c2c2;"></div>
<div style="left:400.3px;top:168px;width:374.200px;height:590.500px;overflow:hidden;background:#fff;border-right:1px solid #d0d0d0;border-bottom:1px solid #d0d0d0;">
<div style="left:0.0px;top:0px;width:410.2px;height:31.6px;background:#f5f5f5;border-bottom:1px solid #b9b9b9;border-left:1.200px solid #bdbdbd;"></div>
<div style="left:0.0px;top:31.599999999999994px;width:410.2px;height:33.7px;background:#f5f5f5;border-bottom:1px solid #b9b9b9;border-left:1.200px solid #bdbdbd;"></div>
<div style="left:122.69999999999999px;top:31px;width:1px;height:34px;background:#c0c0c0;"></div>
<div style="left:172.2px;top:31px;width:1px;height:34px;background:#c0c0c0;"></div>
<div style="left:222.2px;top:31px;width:1px;height:34px;background:#c0c0c0;"></div>
<div class="t" style="left:156.04px;top:-3.95px;font-size:14px;color:#1e1e1e;transform:scaleX(0.9598);">1. <span style="font-size:14.5px;font-weight:300;-webkit-text-stroke:.15px">ਬੱਚੇ</span> trampoline</div>
<div class="t" style="left:32.45px;top:28.99px;font-size:16.2px;color:#1e1e1e;transform:scaleX(0.9928);font-weight:300;-webkit-text-stroke:.15px;">ਤਾਰੀਖ਼</div>
<div class="t" style="left:137.24px;top:28.99px;font-size:16.2px;color:#1e1e1e;transform:scaleX(0.9644);font-weight:300;-webkit-text-stroke:.15px;">ਸਮਾਂ</div>
<div class="t" style="left:186.96px;top:28.99px;font-size:16.2px;color:#1e1e1e;transform:scaleX(1.0361);font-weight:300;-webkit-text-stroke:.15px;">ਲੋਕ</div>
<div class="t" style="left:295.34px;top:28.99px;font-size:16.2px;color:#1e1e1e;transform:scaleX(0.9644);font-weight:300;-webkit-text-stroke:.15px;">ਰਿਕਾਰਡ</div>
<div style="left:101.19999999999999px;top:47.5px;"><svg width="11" height="6" viewBox="0 0 11 6"><path d="M0 6h11l-5.500-6z" fill="#5a5a5a"/></svg></div>
<div style="left:0.0px;top:65.30000000000001px;width:410.2px;height:34.4px;background:#daf0fd;"></div>
<div style="left:33.69999999999999px;top:65.30000000000001px;width:376.5px;height:34.4px;background:#0080c5;"></div>
<div class="ic" style="left:8.399999999999977px;top:74.60000000000002px;"><svg width="17" height="17" viewBox="0 0 17 17"><circle cx="8.500" cy="8.500" r="7.400" fill="#fff" fill-opacity="0" stroke="#363c3c" stroke-width="1.5"/><path d="M5.500 5.500l5.500 5.500M11.500 6.500v5h-5" stroke="#363c3c" stroke-width="1.7" fill="none"/></svg></div>
<div class="t" style="left:33.55px;top:54.55px;font-size:14px;color:#00e4ff;transform:scaleX(0.9957);">25.09.2024</div>
<div class="t" style="left:223.84px;top:53.79px;font-size:16.2px;color:#00e4ff;transform:scaleX(0.9457);font-weight:300;-webkit-text-stroke:.15px;">ਬੁੱਧਵਾਰ</div>
<div style="left:0.0px;top:99.69999999999999px;width:410.2px;height:20.2px;background:#e0fbe4;"></div>
<div class="t" style="left:123.96px;top:88.45px;font-size:14.3px;color:#1c1c1c;transform:scaleX(0.9401);-webkit-text-stroke:.2px;">10:00</div>
<div style="left:0.0px;top:119.69999999999999px;width:410.2px;height:20.2px;background:#daf0fd;"></div>
<div class="t" style="left:123.93px;top:108.45px;font-size:14.3px;color:#1c1c1c;transform:scaleX(0.9684);-webkit-text-stroke:.2px;">11:00</div>
<div style="left:0.0px;top:139.7px;width:410.2px;height:20.2px;background:#e0fbe4;"></div>
<div style="left:123.69999999999999px;top:139.7px;width:286.5px;height:20px;background:#ffffc0;"></div>
<div class="t" style="left:123.96px;top:128.45px;font-size:14.3px;color:#d31d1d;transform:scaleX(0.9401);-webkit-text-stroke:.2px;">12:00</div>
<div class="t" style="left:172.74px;top:128.45px;font-size:14.3px;color:#d31d1d;transform:scaleX(1.1147);-webkit-text-stroke:.2px;">0/1</div>
<div class="t" style="left:224.53px;top:128.45px;font-size:14.3px;color:#d31d1d;transform:scaleX(0.9261);"><span style="font-size:14.5px;font-weight:300;-webkit-text-stroke:.15px">ਬੱਚੇ</span> trampoline</div>
<div class="ic" style="left:73.19999999999999px;top:139.7px;"><svg width="21" height="19" viewBox="0 0 21 19"><path d="M1.300 6v11.500M19.700 6v11.500M10.500 9.500v6" stroke="#5f6d6d" stroke-width="1.600"/><ellipse cx="10.500" cy="5.600" rx="9.800" ry="5" fill="#6a7878"/><ellipse cx="10.500" cy="5.400" rx="6.600" ry="2.900" fill="#f6b22c"/></svg></div>
<div style="left:0.0px;top:159.7px;width:410.2px;height:20.2px;background:#daf0fd;"></div>
<div class="t" style="left:123.96px;top:148.45px;font-size:14.3px;color:#1c1c1c;transform:scaleX(0.9401);-webkit-text-stroke:.2px;">12:00</div>
<div style="left:0.0px;top:179.7px;width:410.2px;height:20.2px;background:#e0fbe4;"></div>
<div class="t" style="left:123.96px;top:168.45px;font-size:14.3px;color:#1c1c1c;transform:scaleX(0.9401);-webkit-text-stroke:.2px;">13:00</div>
<div style="left:0.0px;top:199.7px;width:410.2px;height:20.2px;background:#daf0fd;"></div>
<div class="t" style="left:123.96px;top:188.45px;font-size:14.3px;color:#1c1c1c;transform:scaleX(0.9401);-webkit-text-stroke:.2px;">14:00</div>
<div style="left:0.0px;top:219.7px;width:410.2px;height:20.2px;background:#e0fbe4;"></div>
<div class="t" style="left:123.96px;top:208.45px;font-size:14.3px;color:#1c1c1c;transform:scaleX(0.9401);-webkit-text-stroke:.2px;">15:00</div>
<div style="left:0.0px;top:239.7px;width:410.2px;height:20.2px;background:#daf0fd;"></div>
<div class="t" style="left:123.96px;top:228.45px;font-size:14.3px;color:#1c1c1c;transform:scaleX(0.9401);-webkit-text-stroke:.2px;">16:00</div>
<div style="left:0.0px;top:259.7px;width:410.2px;height:20.2px;background:#e0fbe4;"></div>
<div class="t" style="left:123.96px;top:248.45px;font-size:14.3px;color:#1c1c1c;transform:scaleX(0.9401);-webkit-text-stroke:.2px;">17:00</div>
<div style="left:0.0px;top:279.7px;width:410.2px;height:20.2px;background:#daf0fd;"></div>
<div class="t" style="left:123.96px;top:268.45px;font-size:14.3px;color:#1c1c1c;transform:scaleX(0.9401);-webkit-text-stroke:.2px;">18:00</div>
<div style="left:0.0px;top:299.7px;width:410.2px;height:20.2px;background:#e0fbe4;"></div>
<div class="t" style="left:123.96px;top:288.45px;font-size:14.3px;color:#1c1c1c;transform:scaleX(0.9401);-webkit-text-stroke:.2px;">19:00</div>
<div style="left:0.0px;top:319.7px;width:410.2px;height:20.2px;background:#daf0fd;"></div>
<div class="t" style="left:124.44px;top:308.45px;font-size:14.3px;color:#1c1c1c;transform:scaleX(0.9266);-webkit-text-stroke:.2px;">20:00</div>
<div style="left:0.0px;top:339.7px;width:410.2px;height:34.0px;background:#e0fbe4;"></div>
<div style="left:33.69999999999999px;top:339.7px;width:376.5px;height:34.0px;background:#0080c5;"></div>
<div class="ic" style="left:8.399999999999977px;top:349.0px;"><svg width="17" height="17" viewBox="0 0 17 17"><circle cx="8.500" cy="8.500" r="7.400" fill="#fff" fill-opacity="0" stroke="#363c3c" stroke-width="1.5"/><path d="M5.500 5.500l5.500 5.500M11.500 6.500v5h-5" stroke="#363c3c" stroke-width="1.7" fill="none"/></svg></div>
<div class="t" style="left:33.55px;top:328.95px;font-size:14px;color:#ffffff;transform:scaleX(0.9957);">26.09.2024</div>
<div class="t" style="left:224.14px;top:328.19px;font-size:16.2px;color:#ffffff;transform:scaleX(0.9614);font-weight:300;-webkit-text-stroke:.15px;">ਵੀਰਵਾਰ ਨੂੰ</div>
<div style="left:0.0px;top:373.70000000000005px;width:410.2px;height:20.2px;background:#daf0fd;"></div>
<div class="t" style="left:123.96px;top:362.45px;font-size:14.3px;color:#1c1c1c;transform:scaleX(0.9401);-webkit-text-stroke:.2px;">10:00</div>
<div style="left:0.0px;top:393.70000000000005px;width:410.2px;height:20.2px;background:#e0fbe4;"></div>
<div class="t" style="left:123.93px;top:382.45px;font-size:14.3px;color:#1c1c1c;transform:scaleX(0.9684);-webkit-text-stroke:.2px;">11:00</div>
<div style="left:0.0px;top:413.70000000000005px;width:410.2px;height:20.2px;background:#daf0fd;"></div>
<div class="t" style="left:123.96px;top:402.45px;font-size:14.3px;color:#1c1c1c;transform:scaleX(0.9401);-webkit-text-stroke:.2px;">12:00</div>
<div style="left:0.0px;top:433.70000000000005px;width:410.2px;height:20.2px;background:#e0fbe4;"></div>
<div class="t" style="left:123.96px;top:422.45px;font-size:14.3px;color:#1c1c1c;transform:scaleX(0.9401);-webkit-text-stroke:.2px;">13:00</div>
<div style="left:0.0px;top:453.70000000000005px;width:410.2px;height:20.2px;background:#daf0fd;"></div>
<div class="t" style="left:123.96px;top:442.45px;font-size:14.3px;color:#1c1c1c;transform:scaleX(0.9401);-webkit-text-stroke:.2px;">14:00</div>
<div style="left:0.0px;top:473.70000000000005px;width:410.2px;height:20.2px;background:#e0fbe4;"></div>
<div class="t" style="left:123.96px;top:462.45px;font-size:14.3px;color:#1c1c1c;transform:scaleX(0.9401);-webkit-text-stroke:.2px;">15:00</div>
<div style="left:0.0px;top:493.70000000000005px;width:410.2px;height:20.2px;background:#daf0fd;"></div>
<div class="t" style="left:123.96px;top:482.45px;font-size:14.3px;color:#1c1c1c;transform:scaleX(0.9401);-webkit-text-stroke:.2px;">16:00</div>
<div style="left:0.0px;top:513.7px;width:410.2px;height:20.2px;background:#e0fbe4;"></div>
<div class="t" style="left:123.96px;top:502.45px;font-size:14.3px;color:#1c1c1c;transform:scaleX(0.9401);-webkit-text-stroke:.2px;">17:00</div>
<div style="left:0.0px;top:533.7px;width:410.2px;height:20.2px;background:#daf0fd;"></div>
<div class="t" style="left:123.96px;top:522.45px;font-size:14.3px;color:#1c1c1c;transform:scaleX(0.9401);-webkit-text-stroke:.2px;">18:00</div>
<div style="left:0.0px;top:553.7px;width:410.2px;height:20.2px;background:#e0fbe4;"></div>
<div class="t" style="left:123.96px;top:542.45px;font-size:14.3px;color:#1c1c1c;transform:scaleX(0.9401);-webkit-text-stroke:.2px;">19:00</div>
<div style="left:0.0px;top:573.7px;width:410.2px;height:20.2px;background:#daf0fd;"></div>
<div class="t" style="left:124.44px;top:562.45px;font-size:14.3px;color:#1c1c1c;transform:scaleX(0.9266);-webkit-text-stroke:.2px;">20:00</div>
</div>
<div style="left:781px;top:175px;"><svg width="8" height="4" viewBox="0 0 8 4"><path d="M0 4h8l-4-4z" fill="#8a8a8a"/></svg></div>
<div style="left:780px;top:187.5px;width:10px;height:545.5px;background:#b3b3b3;"></div>
<div style="left:781px;top:745px;"><svg width="8" height="4" viewBox="0 0 8 4"><path d="M0 0h8l-4 4z" fill="#8a8a8a"/></svg></div>
<div style="left:409px;top:765px;"><svg width="4" height="8" viewBox="0 0 4 8"><path d="M4 0v8l-4-4z" fill="#8a8a8a"/></svg></div>
<div style="left:421.5px;top:764.5px;width:300.5px;height:9.5px;background:#b3b3b3;"></div>
<div style="left:761px;top:765px;"><svg width="4" height="8" viewBox="0 0 4 8"><path d="M0 0v8l4-4z" fill="#8a8a8a"/></svg></div>
<div style="left:804.3px;top:166px;width:397.2px;height:613.5px;background:#fff;border:1px solid #d4d4d4;border-top:2px solid #b4b4b4;border-left:1px solid #c2c2c2;"></div>
<div style="left:805.3px;top:168px;width:374.200px;height:590.500px;overflow:hidden;background:#fff;border-right:1px solid #d0d0d0;border-bottom:1px solid #d0d0d0;">
<div style="left:0.0px;top:0px;width:410.2px;height:31.6px;background:#f5f5f5;border-bottom:1px solid #b9b9b9;border-left:1.200px solid #bdbdbd;"></div>
<div style="left:0.0px;top:31.599999999999994px;width:410.2px;height:33.7px;background:#f5f5f5;border-bottom:1px solid #b9b9b9;border-left:1.200px solid #bdbdbd;"></div>
<div style="left:122.69999999999999px;top:31px;width:1px;height:34px;background:#c0c0c0;"></div>
<div style="left:172.2px;top:31px;width:1px;height:34px;background:#c0c0c0;"></div>
<div style="left:222.2px;top:31px;width:1px;height:34px;background:#c0c0c0;"></div>
<div class="t" style="left:144.37px;top:-3.95px;font-size:14px;color:#1e1e1e;transform:scaleX(0.9719);">2. <span style="font-size:16.2px;font-weight:300;-webkit-text-stroke:.15px">ਰੋਲਰ ਸਕੇਟਿੰਗ ਖੇਤਰ</span></div>
<div class="t" style="left:32.45px;top:28.99px;font-size:16.2px;color:#1e1e1e;transform:scaleX(0.9928);font-weight:300;-webkit-text-stroke:.15px;">ਤਾਰੀਖ਼</div>
<div class="t" style="left:137.24px;top:28.99px;font-size:16.2px;color:#1e1e1e;transform:scaleX(0.9644);font-weight:300;-webkit-text-stroke:.15px;">ਸਮਾਂ</div>
<div class="t" style="left:186.96px;top:28.99px;font-size:16.2px;color:#1e1e1e;transform:scaleX(1.0361);font-weight:300;-webkit-text-stroke:.15px;">ਲੋਕ</div>
<div class="t" style="left:295.34px;top:28.99px;font-size:16.2px;color:#1e1e1e;transform:scaleX(0.9644);font-weight:300;-webkit-text-stroke:.15px;">ਰਿਕਾਰਡ</div>
<div style="left:101.19999999999999px;top:47.5px;"><svg width="11" height="6" viewBox="0 0 11 6"><path d="M0 6h11l-5.500-6z" fill="#5a5a5a"/></svg></div>
<div style="left:0.0px;top:65.30000000000001px;width:410.2px;height:34.4px;background:#daf0fd;"></div>
<div style="left:33.69999999999999px;top:65.30000000000001px;width:376.5px;height:34.4px;background:#0080c5;"></div>
<div class="ic" style="left:8.399999999999977px;top:74.60000000000002px;"><svg width="17" height="17" viewBox="0 0 17 17"><circle cx="8.500" cy="8.500" r="7.400" fill="#fff" fill-opacity="0" stroke="#363c3c" stroke-width="1.5"/><path d="M5.500 5.500l5.500 5.500M11.500 6.500v5h-5" stroke="#363c3c" stroke-width="1.7" fill="none"/></svg></div>
<div class="t" style="left:33.55px;top:54.55px;font-size:14px;color:#00e4ff;transform:scaleX(0.9957);">25.09.2024</div>
<div class="t" style="left:223.84px;top:53.79px;font-size:16.2px;color:#00e4ff;transform:scaleX(0.9457);font-weight:300;-webkit-text-stroke:.15px;">ਬੁੱਧਵਾਰ</div>
<div style="left:0.0px;top:99.69999999999999px;width:410.2px;height:20.2px;background:#e0fbe4;"></div>
<div class="t" style="left:123.96px;top:88.45px;font-size:14.3px;color:#1c1c1c;transform:scaleX(0.9401);-webkit-text-stroke:.2px;">10:00</div>
<div style="left:0.0px;top:119.69999999999999px;width:410.2px;height:20.2px;background:#daf0fd;"></div>
<div class="t" style="left:123.93px;top:108.45px;font-size:14.3px;color:#1c1c1c;transform:scaleX(0.9684);-webkit-text-stroke:.2px;">11:00</div>
<div style="left:0.0px;top:139.7px;width:410.2px;height:20.2px;background:#e0fbe4;"></div>
<div class="t" style="left:123.96px;top:128.45px;font-size:14.3px;color:#1c1c1c;transform:scaleX(0.9401);-webkit-text-stroke:.2px;">12:00</div>
<div style="left:0.0px;top:159.7px;width:410.2px;height:20.2px;background:#daf0fd;"></div>
<div class="t" style="left:123.96px;top:148.45px;font-size:14.3px;color:#1c1c1c;transform:scaleX(0.9401);-webkit-text-stroke:.2px;">13:00</div>
<div style="left:0.0px;top:179.7px;width:410.2px;height:20.2px;background:#e0fbe4;"></div>
<div class="t" style="left:123.96px;top:168.45px;font-size:14.3px;color:#1c1c1c;transform:scaleX(0.9401);-webkit-text-stroke:.2px;">14:00</div>
<div style="left:0.0px;top:199.7px;width:410.2px;height:20.2px;background:#daf0fd;"></div>
<div style="left:123.69999999999999px;top:199.7px;width:286.5px;height:20px;background:#ffffc0;"></div>
<div class="t" style="left:123.96px;top:188.45px;font-size:14.3px;color:#d31d1d;transform:scaleX(0.9401);-webkit-text-stroke:.2px;">15:00</div>
<div class="t" style="left:172.74px;top:188.45px;font-size:14.3px;color:#d31d1d;transform:scaleX(1.1147);-webkit-text-stroke:.2px;">0/1</div>
<div class="t" style="left:224.14px;top:188.45px;font-size:14.3px;color:#d31d1d;transform:scaleX(0.9766);"><span style="font-size:16.2px;font-weight:300;-webkit-text-stroke:.15px">ਰੋਲਰਜ਼</span></div>
<div class="ic" style="left:73.19999999999999px;top:199.7px;"><svg width="22" height="20" viewBox="0 0 22 20"><path d="M2.500 1.200h7.500v5.300l7.500 3.200c1.600.8 2 2.200 2 3.800h-17z" fill="#4f5b8e" stroke="#46507e" stroke-width=".6"/><path d="M3.300 2h5.800v3.500l-2 1-1.500-1-2.300 1z" fill="#9aa8d4"/><path d="M8 9.500l3-1.500 1.500 2z" fill="#d8604a"/><rect x="2.300" y="13.300" width="17.500" height="2" fill="#7f8bb8"/><circle cx="3.3" cy="17.200" r="2.300" fill="#cf4a44" stroke="#b03a36" stroke-width=".5"/><circle cx="3.3" cy="17.200" r=".8" fill="#f0d0d0"/><circle cx="8.3" cy="17.200" r="2.300" fill="#cf4a44" stroke="#b03a36" stroke-width=".5"/><circle cx="8.3" cy="17.200" r=".8" fill="#f0d0d0"/><circle cx="13.3" cy="17.200" r="2.300" fill="#cf4a44" stroke="#b03a36" stroke-width=".5"/><circle cx="13.3" cy="17.200" r=".8" fill="#f0d0d0"/><circle cx="18.3" cy="17.200" r="2.300" fill="#cf4a44" stroke="#b03a36" stroke-width=".5"/><circle cx="18.3" cy="17.200" r=".8" fill="#f0d0d0"/><circle cx="13.500" cy="1.600" r="1.400" fill="#c9a3a8"/><circle cx="18.800" cy="4.300" r="1.500" fill="#c4a6a6"/></svg></div>
<div style="left:0.0px;top:219.7px;width:410.2px;height:20.2px;background:#e0fbe4;"></div>
<div class="t" style="left:123.96px;top:208.45px;font-size:14.3px;color:#1c1c1c;transform:scaleX(0.9401);-webkit-text-stroke:.2px;">15:00</div>
<div style="left:0.0px;top:239.7px;width:410.2px;height:20.2px;background:#daf0fd;"></div>
<div class="t" style="left:123.96px;top:228.45px;font-size:14.3px;color:#1c1c1c;transform:scaleX(0.9401);-webkit-text-stroke:.2px;">16:00</div>
<div style="left:0.0px;top:259.7px;width:410.2px;height:20.2px;background:#e0fbe4;"></div>
<div class="t" style="left:123.96px;top:248.45px;font-size:14.3px;color:#1c1c1c;transform:scaleX(0.9401);-webkit-text-stroke:.2px;">17:00</div>
<div style="left:0.0px;top:279.7px;width:410.2px;height:20.2px;background:#daf0fd;"></div>
<div class="t" style="left:123.96px;top:268.45px;font-size:14.3px;color:#1c1c1c;transform:scaleX(0.9401);-webkit-text-stroke:.2px;">18:00</div>
<div style="left:0.0px;top:299.7px;width:410.2px;height:20.2px;background:#e0fbe4;"></div>
<div class="t" style="left:123.96px;top:288.45px;font-size:14.3px;color:#1c1c1c;transform:scaleX(0.9401);-webkit-text-stroke:.2px;">19:00</div>
<div style="left:0.0px;top:319.7px;width:410.2px;height:20.2px;background:#daf0fd;"></div>
<div class="t" style="left:124.44px;top:308.45px;font-size:14.3px;color:#1c1c1c;transform:scaleX(0.9266);-webkit-text-stroke:.2px;">20:00</div>
<div style="left:0.0px;top:339.7px;width:410.2px;height:34.0px;background:#e0fbe4;"></div>
<div style="left:33.69999999999999px;top:339.7px;width:376.5px;height:34.0px;background:#0080c5;"></div>
<div class="ic" style="left:8.399999999999977px;top:349.0px;"><svg width="17" height="17" viewBox="0 0 17 17"><circle cx="8.500" cy="8.500" r="7.400" fill="#fff" fill-opacity="0" stroke="#363c3c" stroke-width="1.5"/><path d="M5.500 5.500l5.500 5.500M11.500 6.500v5h-5" stroke="#363c3c" stroke-width="1.7" fill="none"/></svg></div>
<div class="t" style="left:33.55px;top:328.95px;font-size:14px;color:#ffffff;transform:scaleX(0.9957);">26.09.2024</div>
<div class="t" style="left:224.14px;top:328.19px;font-size:16.2px;color:#ffffff;transform:scaleX(0.9614);font-weight:300;-webkit-text-stroke:.15px;">ਵੀਰਵਾਰ ਨੂੰ</div>
<div style="left:0.0px;top:373.70000000000005px;width:410.2px;height:20.2px;background:#daf0fd;"></div>
<div class="t" style="left:123.96px;top:362.45px;font-size:14.3px;color:#1c1c1c;transform:scaleX(0.9401);-webkit-text-stroke:.2px;">10:00</div>
<div style="left:0.0px;top:393.70000000000005px;width:410.2px;height:20.2px;background:#e0fbe4;"></div>
<div class="t" style="left:123.93px;top:382.45px;font-size:14.3px;color:#1c1c1c;transform:scaleX(0.9684);-webkit-text-stroke:.2px;">11:00</div>
<div style="left:0.0px;top:413.70000000000005px;width:410.2px;height:20.2px;background:#daf0fd;"></div>
<div class="t" style="left:123.96px;top:402.45px;font-size:14.3px;color:#1c1c1c;transform:scaleX(0.9401);-webkit-text-stroke:.2px;">12:00</div>
<div style="left:0.0px;top:433.70000000000005px;width:410.2px;height:20.2px;background:#e0fbe4;"></div>
<div class="t" style="left:123.96px;top:422.45px;font-size:14.3px;color:#1c1c1c;transform:scaleX(0.9401);-webkit-text-stroke:.2px;">13:00</div>
<div style="left:0.0px;top:453.70000000000005px;width:410.2px;height:20.2px;background:#daf0fd;"></div>
<div class="t" style="left:123.96px;top:442.45px;font-size:14.3px;color:#1c1c1c;transform:scaleX(0.9401);-webkit-text-stroke:.2px;">14:00</div>
<div style="left:0.0px;top:473.70000000000005px;width:410.2px;height:20.2px;background:#e0fbe4;"></div>
<div class="t" style="left:123.96px;top:462.45px;font-size:14.3px;color:#1c1c1c;transform:scaleX(0.9401);-webkit-text-stroke:.2px;">15:00</div>
<div style="left:0.0px;top:493.70000000000005px;width:410.2px;height:20.2px;background:#daf0fd;"></div>
<div class="t" style="left:123.96px;top:482.45px;font-size:14.3px;color:#1c1c1c;transform:scaleX(0.9401);-webkit-text-stroke:.2px;">16:00</div>
<div style="left:0.0px;top:513.7px;width:410.2px;height:20.2px;background:#e0fbe4;"></div>
<div class="t" style="left:123.96px;top:502.45px;font-size:14.3px;color:#1c1c1c;transform:scaleX(0.9401);-webkit-text-stroke:.2px;">17:00</div>
<div style="left:0.0px;top:533.7px;width:410.2px;height:20.2px;background:#daf0fd;"></div>
<div class="t" style="left:123.96px;top:522.45px;font-size:14.3px;color:#1c1c1c;transform:scaleX(0.9401);-webkit-text-stroke:.2px;">18:00</div>
<div style="left:0.0px;top:553.7px;width:410.2px;height:20.2px;background:#e0fbe4;"></div>
<div class="t" style="left:123.96px;top:542.45px;font-size:14.3px;color:#1c1c1c;transform:scaleX(0.9401);-webkit-text-stroke:.2px;">19:00</div>
<div style="left:0.0px;top:573.7px;width:410.2px;height:20.2px;background:#daf0fd;"></div>
<div class="t" style="left:124.44px;top:562.45px;font-size:14.3px;color:#1c1c1c;transform:scaleX(0.9266);-webkit-text-stroke:.2px;">20:00</div>
</div>
<div style="left:1186px;top:175px;"><svg width="8" height="4" viewBox="0 0 8 4"><path d="M0 4h8l-4-4z" fill="#8a8a8a"/></svg></div>
<div style="left:1185px;top:187.5px;width:10px;height:545.5px;background:#b3b3b3;"></div>
<div style="left:1186px;top:745px;"><svg width="8" height="4" viewBox="0 0 8 4"><path d="M0 0h8l-4 4z" fill="#8a8a8a"/></svg></div>
<div style="left:814px;top:765px;"><svg width="4" height="8" viewBox="0 0 4 8"><path d="M4 0v8l-4-4z" fill="#8a8a8a"/></svg></div>
<div style="left:826.5px;top:764.5px;width:300.5px;height:9.5px;background:#b3b3b3;"></div>
<div style="left:1166px;top:765px;"><svg width="4" height="8" viewBox="0 0 4 8"><path d="M0 0v8l4-4z" fill="#8a8a8a"/></svg></div>
<div style="left:22px;top:811px;width:1202px;height:1px;background:#c6c6c6;"></div>
<div style="left:191px;top:814px;width:1033px;height:1px;background:#c6c6c6;"></div>
<div style="left:1223px;top:811px;width:1px;height:4px;background:#c6c6c6;"></div>
<div style="left:22px;top:811px;width:1px;height:55px;background:#c6c6c6;"></div>
<div style="left:191px;top:811px;width:1px;height:55px;background:#c6c6c6;"></div>
<div style="left:23px;top:812px;width:168px;height:3px;background:#fff;"></div>
<div style="left:22px;top:864px;width:170px;height:2.5px;background:#0c9df2;"></div>
<div class="ic" style="left:39.5px;top:826.5px;"><svg width="31" height="27" viewBox="0 0 31 27"><rect x=".8" y=".8" width="29.400" height="25.400" rx="2.500" fill="url(#gWin)" stroke="#6a86c8" stroke-width="1.300"/><path d="M1.500 7.500v-4a2 2 0 0 1 2-2h24a2 2 0 0 1 2 2v4z" fill="url(#gWinT)"/><rect x="24" y="2.500" width="2.500" height="2.500" fill="#f04a3a"/></svg></div>
<div class="t" style="left:83.33px;top:818.19px;font-size:16.2px;color:#2196e8;transform:scaleX(0.9355);font-weight:300;-webkit-text-stroke:.15px;">ਰਜਿਸਟ੍ਰੇਸ਼ਨ</div>
<div style="left:158.500px;top:834px;"><svg width="12" height="10" viewBox="0 0 12 10"><path d="M1 .8l9.500 8.400M10.500 .8l-9.500 8.400" stroke="#2196e8" stroke-width="1.900"/></svg></div>
<div class="ic" style="left:28.3px;top:868.7px;"><svg width="21" height="21" viewBox="0 0 21 21"><circle cx="10.500" cy="10.500" r="10" fill="#4a7fb5"/><rect x="9" y="8.500" width="3" height="7.500" fill="#fff"/><circle cx="10.500" cy="5.500" r="1.700" fill="#fff"/></svg></div>
<div class="t" style="left:70.41px;top:860.45px;font-size:14px;color:#333;transform:scaleX(0.9891);-webkit-text-stroke:.2px;">7.2.9060.10 Standard</div>
<div style="left:229px;top:870.5px;width:1px;height:18.5px;background:#c4c4c4;"></div>
<div style="left:399.5px;top:870.5px;width:1px;height:18.5px;background:#c4c4c4;"></div>
<div style="left:578px;top:870.5px;width:1px;height:18.5px;background:#c4c4c4;"></div>
<div style="left:726.5px;top:870.5px;width:1px;height:18.5px;background:#c4c4c4;"></div>
<div style="left:875.5px;top:870.5px;width:1px;height:18.5px;background:#c4c4c4;"></div>
<div style="left:1193px;top:870.5px;width:1px;height:18.5px;background:#c4c4c4;"></div>
<div class="ic" style="left:243.5px;top:870px;"><svg width="15" height="20" viewBox="0 0 15 20"><path d="M.5 3.500v13c0 4 14 4 14 0v-13z" fill="url(#gDb)" stroke="#c9782a" stroke-width="1"/><ellipse cx="7.500" cy="3.500" rx="7" ry="3" fill="#fdeec8" stroke="#c9782a"/><path d="M.5 8c0 4 14 4 14 0M.5 12.500c0 4 14 4 14 0" fill="none" stroke="#c9782a" stroke-width="1"/></svg></div>
<div class="t" style="left:280.63px;top:860.45px;font-size:14px;color:#333;transform:scaleX(1.0205);-webkit-text-stroke:.2px;">localhost (utf8)</div>
<div class="ic" style="left:412px;top:870.5px;"><svg width="19" height="19" viewBox="0 0 19 19"><path d="M0.5 17.7c0-4.8 3.1-6.4 6.3-6.4h4.9c3.1 0 6.3 1.6 6.3 6.4c0 0.9-17.5 0.9-17.5 0z" fill="url(#gBody2)" stroke="#6f9a28" stroke-width=".8"/><path d="M7.6 10.8h3.3v2.9l-1.7 1.0l-1.7-1.0z" fill="#e4b088"/><path d="M9.3 0.4c4.4 0 5.4 2.9 5.2 5.9c0 2.6-0.5 4.4-1.7 5.6h-7.1c-1.1-1.2-1.7-3.0-1.7-5.6c-0.2-3.0 0.8-5.9 5.2-5.9z" fill="url(#gHair2)" stroke="#a8683a" stroke-width=".5"/><ellipse cx="9.3" cy="8.2" rx="3.4" ry="4.7" fill="url(#gSkin)"/><path d="M5.6 7.0c0.7-4.2 6.2-4.2 7.5 0c-1.4-2.3-3.1-2.8-4.5-2.1c-1.0 0.2-2.1 0.9-3.0 2.1z" fill="url(#gHair2)"/></svg></div>
<div class="t" style="left:451.15px;top:860.45px;font-size:14px;color:#333;transform:scaleX(0.9475);-webkit-text-stroke:.2px;">NIKOLAY (MAIN)</div>
<div class="ic" style="left:591px;top:870px;"><svg width="18" height="20" viewBox="0 0 18 20"><rect x=".5" y=".5" width="17" height="19" fill="#f4f7fd" stroke="#8a9ad0"/><rect x="1" y="1" width="16" height="4.500" fill="#e2574a"/><text x="9" y="16" text-anchor="middle" font-family="Liberation Sans,sans-serif" font-weight="bold" font-size="10.500" fill="#2a3a6a">31</text></svg></div>
<div class="t" style="left:630.29px;top:860.45px;font-size:14px;color:#333;transform:scaleX(1.0209);-webkit-text-stroke:.2px;">25.09.2024</div>
<div class="t" style="left:761.79px;top:860.45px;font-size:14px;color:#333;transform:scaleX(1.0272);-webkit-text-stroke:.2px;">00:00:00:004</div>
<div class="t" style="left:888.81px;top:860.45px;font-size:14px;color:#333;transform:scaleX(0.9910);-webkit-text-stroke:.2px;">17:00</div>
<div style="left:1207.500px;top:875px;"><svg width="14" height="15" viewBox="0 0 14 15"><rect x="10.5" y="1.5" width="2" height="2" fill="#7a7a7a"/><rect x="7" y="5" width="2" height="2" fill="#7a7a7a"/><rect x="10.5" y="5" width="2" height="2" fill="#7a7a7a"/><rect x="3.5" y="8.5" width="2" height="2" fill="#7a7a7a"/><rect x="7" y="8.5" width="2" height="2" fill="#7a7a7a"/><rect x="10.5" y="8.5" width="2" height="2" fill="#7a7a7a"/><rect x="0" y="12" width="2" height="2" fill="#7a7a7a"/><rect x="3.5" y="12" width="2" height="2" fill="#7a7a7a"/><rect x="7" y="12" width="2" height="2" fill="#7a7a7a"/><rect x="10.5" y="12" width="2" height="2" fill="#7a7a7a"/></svg></div>
</div></body></html>
